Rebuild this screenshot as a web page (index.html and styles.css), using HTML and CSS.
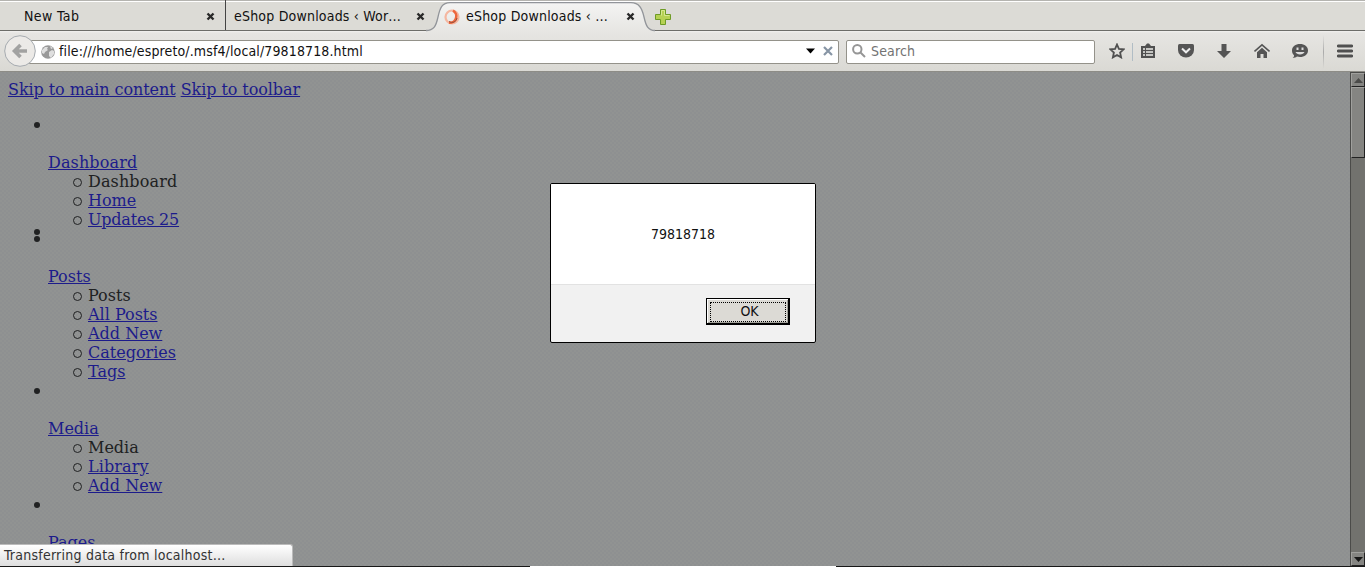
FILE: index.html
```html
<!DOCTYPE html>
<html lang="en">
<head>
<meta charset="utf-8">
<title>eShop Downloads</title>
<link rel="stylesheet" href="styles.css">
</head>
<body>
<div class="window">
  <div class="tabs">
    <div class="tab first"><span class="label">New Tab</span><svg class="x" viewBox="0 0 9 9"><path d="M1.5 1.500l6 6M7.500 1.500l-6 6"/></svg></div>
    <div class="tab second"><span class="label">eShop Downloads ‹ Wor…</span><svg class="x" viewBox="0 0 9 9"><path d="M1.5 1.500l6 6M7.500 1.500l-6 6"/></svg></div>
    <div class="tab active">
      <svg class="tabshape" viewBox="0 0 234 31"><defs><linearGradient id="tg" x2="0" y2="1"><stop stop-color="#f4f4f3"/><stop offset="1" stop-color="#e6e5e2"/></linearGradient></defs><path d="M0 31V28.500C8 28.500 10 24 12 15C14 6 16 .7 24 .7H205C213 .7 216 6 218 15C220 24 222 28.500 229 28.500V31Z" fill="url(#tg)"/><path d="M0 28.500C8 28.500 10 24 12 15C14 6 16 .7 24 .7H205C213 .7 216 6 218 15C220 24 222 28.500 229 28.500" fill="none" stroke="#92959a" stroke-width="1.300"/></svg>
      <svg class="spin" viewBox="0 0 16 16"><circle cx="8" cy="8" r="6.500" fill="none" stroke="#f5b7a0" stroke-width="2.200"/><path d="M9 1.600A6.500 6.500 0 0 1 5 13.700" fill="none" stroke="#ed673d" stroke-width="2.600"/><path d="M13 9A5 5 0 0 1 5 12.500" fill="none" stroke="#99513b"/></svg>
      <span class="label">eShop Downloads ‹ …</span><svg class="x" viewBox="0 0 9 9"><path d="M1.5 1.500l6 6M7.500 1.500l-6 6"/></svg>
    </div>
    <svg class="plus" viewBox="0 0 16 16"><path d="M5.500.500h5v5h5v5h-5v5h-5v-5h-5v-5h5z" fill="#b6d153" stroke="#6e9b26"/><path d="M6.500 6.500v-5h3v5h5" fill="none" stroke="#d6e78e"/></svg>
  </div>
  <div class="toolbar">
    <svg class="back" viewBox="0 0 32 32"><circle cx="16" cy="16" r="15.300" fill="#eceae7" stroke="#a5aaaf"/><path d="M16.500 10L10.500 16l6 6M11 16h12" fill="none" stroke="#a2a2a1" stroke-width="3.600"/></svg>
    <div class="url">
      <svg class="globe" viewBox="0 0 14 14"><circle cx="7" cy="7" r="6.800" fill="#999"/><path d="M1 5l3-3 3 0-1 2 1 1-3 2-1 2-2-1zM8 7l3-2 2 1v3l-3 4-2-2zM9 1l3 2-2 1z" fill="#dfdfdf"/></svg>
      <span class="address">file:///home/espreto/.msf4/local/79818718.html</span>
      <svg class="drop" viewBox="0 0 9 6"><path d="M0 .5h9L4.500 5.500z"/></svg>
      <svg class="stop" viewBox="0 0 10 10"><path d="M1 1l8 8M9 1L1 9" stroke="#8795a5" stroke-width="2.200"/></svg>
    </div>
    <div class="search">
      <svg class="glass" viewBox="0 0 14 14"><circle cx="5.300" cy="5.300" r="4.200"/><path d="M8.500 8.500L13 13"/></svg><span class="hint">Search</span>
    </div>
    <div class="icons">
      <svg class="i star" viewBox="0 0 16 16"><path d="M8 1.500l1.900 4.300 4.800.5-3.600 3.200 1 4.900L8 12l-4.100 2.400 1-4.900L1.300 6.300l4.800-.5z" fill="none" stroke="#505050" stroke-width="1.800"/></svg>
      <i class="sep1"></i>
      <svg class="i clip" viewBox="0 0 16 16"><path d="M1 3h4l2-2.500h2L11 3h4v12H1z" fill="#505050"/><path d="M3 6h2m1 0h7M3 9h2m1 0h7M3 12h2m1 0h7" stroke="#ecebe8" stroke-width="1.700"/></svg>
      <svg class="i pocket" viewBox="0 0 16 16"><path d="M1.500 1h13Q16 1 16 2.500V7a8 7.500 0 0 1-16 0V2.500Q0 1 1.500 1z" fill="#555"/><path d="M4 5.500l4 3.800 4-3.800" fill="none" stroke="#eee" stroke-width="2"/></svg>
      <svg class="i down" viewBox="0 0 16 16"><path d="M5.500 1h5v7H15l-7 7-7-7h4.500z" fill="#555"/></svg>
      <svg class="i home" viewBox="0 0 16 16"><path d="M.5 8.500L8 1.800l7.500 6.700" fill="none" stroke="#555" stroke-width="1.600"/><path d="M3 9.200l5-4.500 5 4.500V15H9.500v-4h-3v4H3z" fill="#555"/></svg>
      <svg class="i chat" viewBox="0 0 16 16"><path d="M8 1c4.500 0 8 2.600 8 6.500S12.500 14 8 14c-1 0-2 0-3-.4C3.700 14.600 2.500 15 .7 15c1-.8 1.500-1.800 1.300-2.700C.7 11.200 0 9.500 0 7.500 0 3.600 3.500 1 8 1z" fill="#555"/><path d="M3.500 9h9c-1 3.300-8 3.300-9 0zM4.500 4.500h2V7h-2zM9.500 4.500h2V7h-2z" fill="#ddd"/></svg>
      <i class="sep2"></i>
      <svg class="i menu" viewBox="0 0 16 16"><path d="M1.300 3h13.400M1.300 8h13.400M1.300 13h13.400" stroke="#505050" stroke-width="2.800" stroke-linecap="round"/></svg>
    </div>
  </div>
  <div class="content">
    <div class="page">
      <div class="skips"><a>Skip to main content</a> <a>Skip to toolbar</a></div>
      <ul class="nav">
        <li class="entry"><a class="wide">Dashboard</a><ul><li class="wide">Dashboard</li><li><a>Home</a></li><li><a class="updates">Updates 25</a></li></ul></li>
        <li class="divider"></li>
        <li class="entry"><a>Posts</a><ul><li>Posts</li><li><a>All Posts</a></li><li><a>Add New</a></li><li><a>Categories</a></li><li><a>Tags</a></li></ul></li>
        <li class="entry"><a>Media</a><ul><li>Media</li><li><a class="wide">Library</a></li><li><a>Add New</a></li></ul></li>
        <li class="entry"><a>Pages</a></li>
      </ul>
    </div>
    <div class="scrollbar">
      <div class="btn"><svg viewBox="0 0 9 5"><path d="M0 5L4.500 0 9 5z" fill="#4b4b49"/></svg></div>
      <div class="thumb"></div><div class="track"></div>
      <div class="btn"><svg viewBox="0 0 9 5"><path d="M0 0h9L4.500 5z" fill="#161616"/></svg></div>
    </div>
  </div>
  <div class="bottom"><i></i></div>
  <div class="dialog">
    <div class="message">79818718</div>
    <div class="actions"><div class="ok"><span>OK</span></div></div>
  </div>
  <div class="status">Transferring data from localhost…</div>
</div>
</body>
</html>
```
FILE: styles.css
```css
* { box-sizing: border-box; }
body { margin: 0; overflow: hidden; font-family: "DejaVu Sans", sans-serif; font-stretch: condensed; font-size: 14px; color: #111; }
svg { display: block; flex: none; }
.window { position: relative; width: 1365px; height: 567px; display: flex; flex-direction: column; overflow: hidden; }
.tabs { height: 31px; flex: none; display: flex; position: relative; background: linear-gradient(#b5b4b0 0 1px, #fff 1px 2px, #dcdbd6 2px 30px, #6d6d69 30px 31px); }
.tab { display: flex; align-items: center; height: 30px; padding-top: 3px; }
.label { flex: 1; white-space: nowrap; letter-spacing: .2px; padding-bottom: 2px; }
.first .label { letter-spacing: .4px; }
.x { width: 9px; height: 9px; stroke: #292929; stroke-width: 2.400; }
.first { width: 226px; padding-left: 24px; padding-right: 10px; border-right: 1px solid #444; }
.second { width: 206px; padding-left: 8px; padding-right: 7px; }
.active { width: 222px; position: relative; padding-left: 12px; padding-right: 19px; z-index: 1; }
.active .label, .active .x, .spin { position: relative; }
.tabshape { position: absolute; left: -6px; top: 2px; width: 234px; height: 31px; }
.spin { width: 16px; height: 16px; margin-right: 6px; }
.plus { width: 16px; height: 16px; margin: 9px 0 0 1px; }
.toolbar { height: 41px; flex: none; display: flex; align-items: center; background: linear-gradient(#f2f1ef 0, #e6e5e2 2px, #dad9d4 40px, #8d8c86 40px); padding-left: 4px; }
.back { width: 32px; height: 32px; margin-bottom: 1px; position: relative; z-index: 1; }
.url, .search { height: 24px; border: 1px solid #94928a; background: #fff; display: flex; align-items: center; border-radius: 2px; }
.url { width: 811px; margin-left: -8px; padding-left: 12px; }
.globe { width: 14px; height: 14px; margin-right: 4px; }
.address { flex: 1; letter-spacing: .13px; padding-bottom: 2px; }
.drop { width: 9px; height: 6px; margin: 0 8px 2px 0; }
.stop { width: 10px; height: 10px; margin: 0 5px 1px 0; }
.search { width: 249px; margin-left: 7px; padding-left: 5px; color: #737373; }
.hint { padding-bottom: 2px; letter-spacing: .15px; }
.glass { width: 14px; height: 14px; margin: 0 5px 2px 0; fill: none; stroke: #969696; stroke-width: 2; }
.icons { display: flex; align-items: center; height: 40px; padding-left: 14px; }
.i { width: 16px; height: 16px; margin-bottom: 1px; }
.sep1 { width: 1px; height: 18px; background: #b1bdc5; margin: 0 7px; }
.pocket, .down, .home, .chat { margin-left: 22px; }
.sep2 { width: 1px; height: 34px; background: linear-gradient(transparent, #aaa, transparent); margin: 0 13px 0 15px; }
.content { height: 494px; display: flex; background: #909292; }
.page { flex: 1; padding: 8px; overflow: hidden; font: 16px/19px "DejaVu Serif", serif; color: #202122; background: repeating-conic-gradient(#8e9091 0 25%, #919392 0 50%) 0 0 / 4px 4px; }
.page a { color: #1c1b8b; text-decoration: underline; }
.skips { letter-spacing: -.07px; }
.updates { letter-spacing: -.2px; }
.wide { letter-spacing: .12px; }
ul { list-style: none; margin: 0; padding: 0; }
.nav { margin-top: 16px; padding-left: 40px; }
.entry { position: relative; padding-top: 38px; }
.entry::before, .divider::before { content: ""; position: absolute; left: -14px; top: 7px; width: 6px; height: 6px; border-radius: 50%; background: #202122; }
.divider { position: relative; height: 0; }
.divider::before { top: 0; }
.entry ul { padding-left: 40px; }
.entry ul li { position: relative; }
.entry ul li::before { content: ""; position: absolute; left: -15px; top: 6px; width: 7px; height: 7px; border-radius: 50%; border: 1px solid #202122; }
.scrollbar { width: 15px; display: flex; flex-direction: column; background: #72726e; border-left: 1px solid #4b4b49; border-top: 1px solid #4b4b49; }
.btn { height: 14px; display: flex; align-items: center; justify-content: center; background: #858582; border: 1px solid; border-color: #a0a09d #222 #222 #a0a09d; }
.btn svg { width: 9px; height: 5px; }
.thumb { height: 71px; background: #858582; border: 1px solid; border-color: #a0a09d #222 #222 #a0a09d; }
.track { flex: 1; }
.bottom { height: 1px; flex: none; background: #181818; }
.bottom i { display: block; width: 306px; height: 1px; margin-left: 530px; background: #fff; }
.dialog { position: absolute; left: 550px; top: 183px; width: 266px; height: 160px; border: 1px solid #000; border-radius: 2px; background: #f1f1f1; display: flex; flex-direction: column; overflow: hidden; }
.message { height: 101px; flex: none; background: #fff; border-bottom: 1px solid #e2e2e2; display: flex; align-items: center; justify-content: center; }
.actions { display: flex; justify-content: flex-end; padding: 13px 25px 0 0; }
.ok { width: 84px; height: 27px; border: 1px solid #000; border-right-width: 2px; border-bottom-width: 2px; background: #dcdad5; box-shadow: inset 1px 1px #fff, inset -1px -1px #a09f98; padding: 3px 2px 1px 3px; }
.ok span { display: flex; align-items: center; justify-content: center; height: 20px; border: 1px dotted #000; padding: 0 0 3px 3px; }
.status { position: absolute; left: 0; top: 544px; width: 293px; height: 22px; padding-left: 4px; line-height: 21px; color: #333; background: linear-gradient(#fff, #dedede); border: 1px solid #bbb; border-left: 0; border-bottom: 0; border-top-right-radius: 3px; letter-spacing: .24px; }
```
